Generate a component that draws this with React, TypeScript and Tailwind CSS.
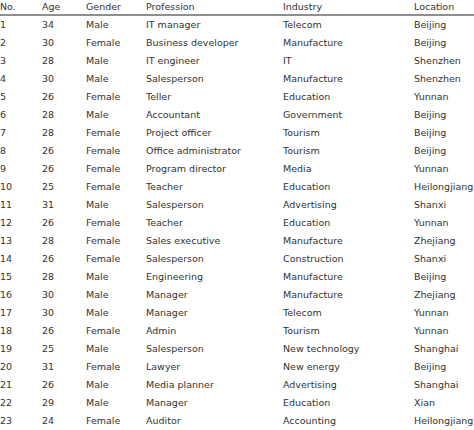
import React from 'react';

const rows: string[][] = [
  ['1', '34', 'Male', 'IT manager', 'Telecom', 'Beijing'],
  ['2', '30', 'Female', 'Business developer', 'Manufacture', 'Beijing'],
  ['3', '28', 'Male', 'IT engineer', 'IT', 'Shenzhen'],
  ['4', '30', 'Male', 'Salesperson', 'Manufacture', 'Shenzhen'],
  ['5', '26', 'Female', 'Teller', 'Education', 'Yunnan'],
  ['6', '28', 'Male', 'Accountant', 'Government', 'Beijing'],
  ['7', '28', 'Female', 'Project officer', 'Tourism', 'Beijing'],
  ['8', '26', 'Female', 'Office administrator', 'Tourism', 'Beijing'],
  ['9', '26', 'Female', 'Program director', 'Media', 'Yunnan'],
  ['10', '25', 'Female', 'Teacher', 'Education', 'Heilongjiang'],
  ['11', '31', 'Male', 'Salesperson', 'Advertising', 'Shanxi'],
  ['12', '26', 'Female', 'Teacher', 'Education', 'Yunnan'],
  ['13', '28', 'Female', 'Sales executive', 'Manufacture', 'Zhejiang'],
  ['14', '26', 'Female', 'Salesperson', 'Construction', 'Shanxi'],
  ['15', '28', 'Male', 'Engineering', 'Manufacture', 'Beijing'],
  ['16', '30', 'Male', 'Manager', 'Manufacture', 'Zhejiang'],
  ['17', '30', 'Male', 'Manager', 'Telecom', 'Yunnan'],
  ['18', '26', 'Female', 'Admin', 'Tourism', 'Yunnan'],
  ['19', '25', 'Male', 'Salesperson', 'New technology', 'Shanghai'],
  ['20', '31', 'Female', 'Lawyer', 'New energy', 'Beijing'],
  ['21', '26', 'Male', 'Media planner', 'Advertising', 'Shanghai'],
  ['22', '29', 'Male', 'Manager', 'Education', 'Xian'],
  ['23', '24', 'Female', 'Auditor', 'Accounting', 'Heilongjiang'],
];

const headers = ['No.', 'Age', 'Gender', 'Profession', 'Industry', 'Location'];
const cols = 'grid grid-cols-[42px_44px_60px_137px_131px_60px]';

export default function App() {
  return (
    <div
      className="w-[474px] h-[430px] bg-white overflow-hidden text-[9.5px] text-[#333333]"
      style={{ fontFamily: '"DejaVu Sans", Verdana, sans-serif' }}
    >
      <div className={`${cols} h-[16px] items-center border-b-2 border-[#8f8f8f]`}>
        {headers.map((h) => (
          <div key={h} className="whitespace-nowrap">{h}</div>
        ))}
      </div>
      {rows.map((r) => (
        <div key={r[0]} className={`${cols} h-[18px] items-center`}>
          {r.map((c, i) => (
            <div key={i} className="whitespace-nowrap">{c}</div>
          ))}
        </div>
      ))}
    </div>
  );
}
